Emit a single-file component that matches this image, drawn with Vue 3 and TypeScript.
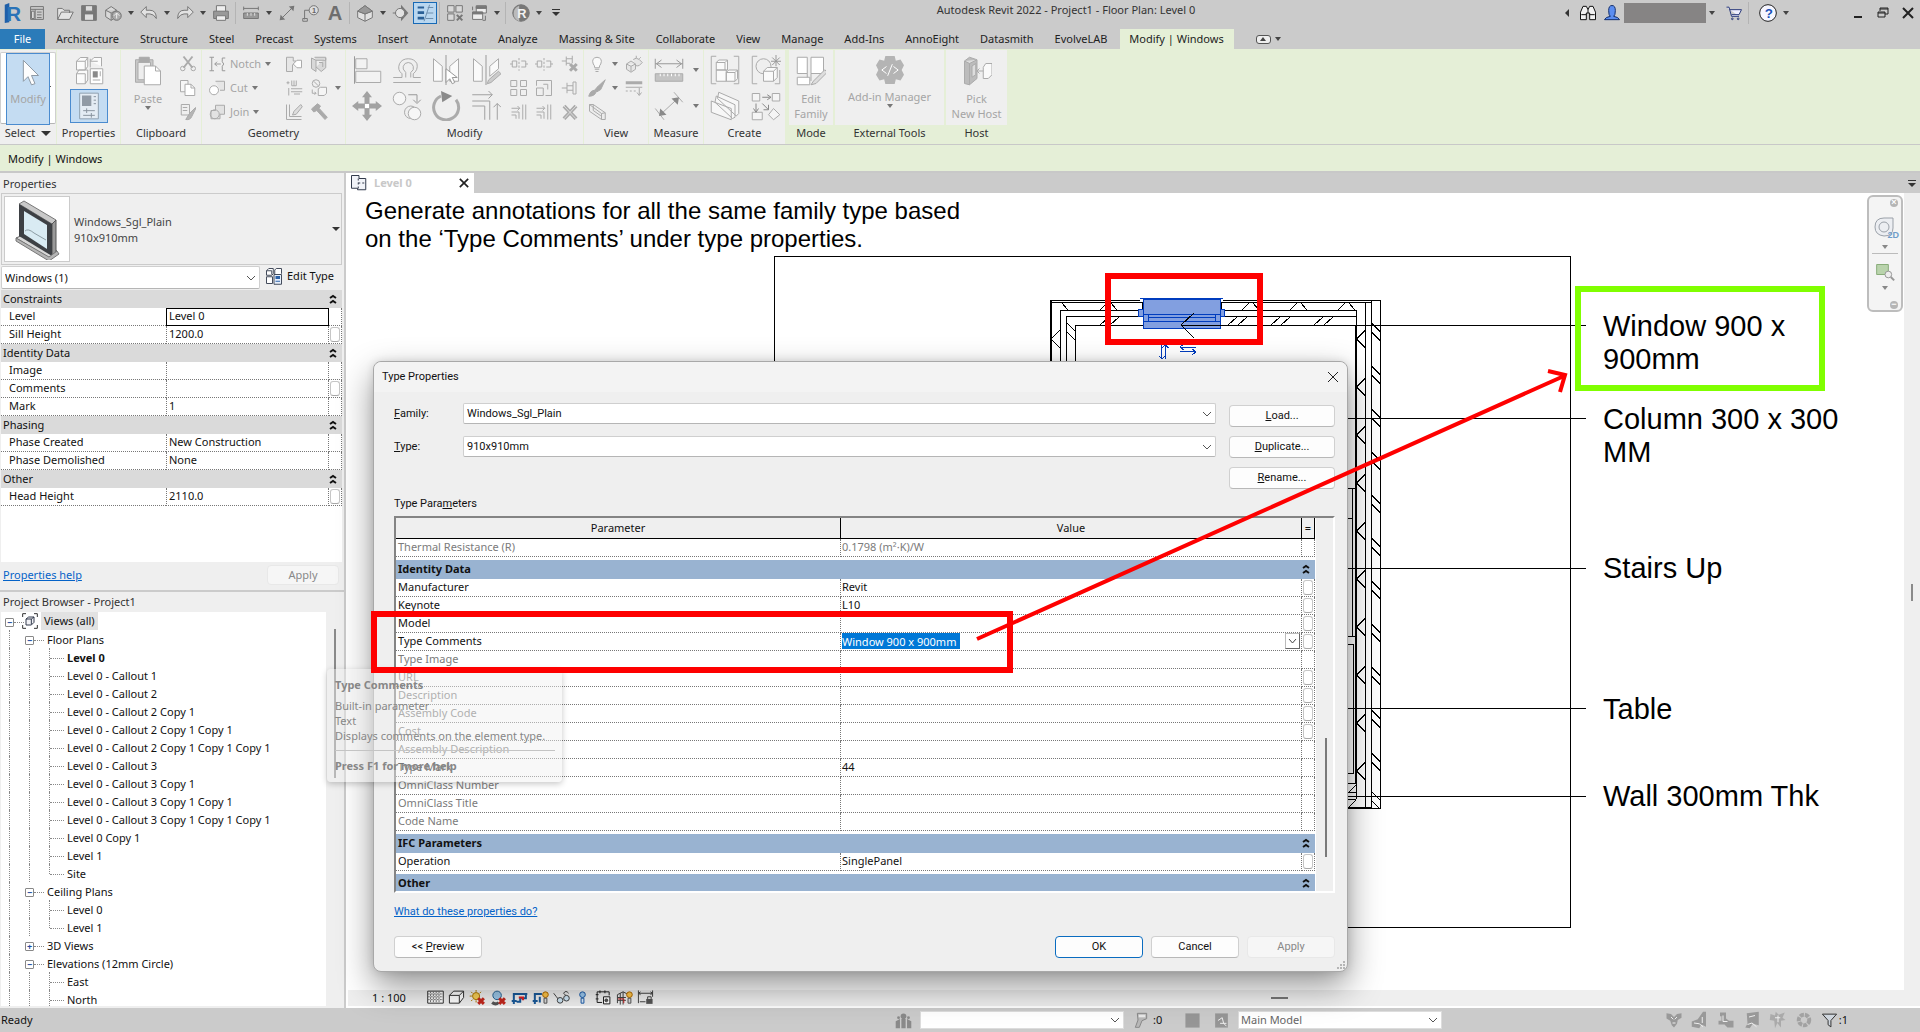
<script setup lang="ts">
import { ref } from 'vue'

interface QuickItem { kind: 'icon' | 'caret' | 'sep' | 'gap'; name?: string; label?: string; active?: boolean }
interface Cell { icon?: string; size?: number; label?: string; caret?: boolean; active?: boolean }
interface Column { w: number; kind?: 'big' | 'select'; pad?: number; cells: Cell[] }
interface Panel { title: string; green?: boolean; arrow?: boolean; cols: Column[] }
interface PropRow { group?: boolean; name: string; value?: string; button?: boolean; boxed?: boolean; dim?: boolean; edit?: boolean; sup?: boolean }
interface TreeRow { level: number; text: string; box?: string; bold?: boolean; last?: boolean }

/* Icon artwork; every drawing inherits stroke and fill from its svg element. */
const G = 'fill="#8a8a8a" stroke="none"'
const L = 'fill="#d9d9d9"'
const art: Record<string, string> = {
  revit: `<path d="M3 3l5-2v21l-5 1z" fill="#1f5fa8" stroke="none"/><text x="5" y="21" font-family="Liberation Sans" font-weight="bold" font-size="22" fill="#2a73b8" stroke="none">R</text>`,
  home: `<path d="M5 5h14v14H5zM5 8h14M10 8v11M12 11h5M12 14h5M12 17h5"/><path d="M6 10h3v8H6z" ${L}/>`,
  open: `<path d="M4 19V7h5l2 2h6v3M4 19l4-8h13l-4 8z" fill="#e4e4e4"/>`,
  save: `<path d="M4 4h16v16H4z" fill="#777"/><path d="M8 4h8v6H8zM7 13h10v7H7z" fill="#ddd"/>`,
  sync: `<path d="M4 9l6-4 6 4v7l-6 4-6-4zM4 9l6 3 6-3M10 12v8" ${L}/><circle cx="16" cy="15" r="5" fill="#aaa"/><path d="M13 15l3-3 3 3M16 12v6" stroke="#eee"/>`,
  undo: `<path d="M9 5v4h4q7 0 7 9-3-5-7-5H9v4l-6-6z" fill="#e2e2e2"/>`,
  redo: `<path d="M15 5v4h-4q-7 0-7 9 3-5 7-5h4v4l6-6z" fill="#e2e2e2"/>`,
  print: `<path d="M7 10V4h10v6" fill="#eee"/><path d="M4 10h16v8H4z" fill="#999"/><path d="M7 15h10v5H7z" fill="#eee"/>`,
  ruler: `<path d="M4 7h16M4 5v4M20 5v4"/><path d="M4 12h16v6H4z" fill="#999"/><path d="M8 12v3M12 12v3M16 12v3" stroke="#ddd"/>`,
  dim: `<path d="M6 18L18 6"/><path d="M4 20l1-6 5 5zM20 4l-1 6-5-5z" fill="#777" stroke="none"/>`,
  tag: `<path d="M5 19V9h5"/><circle cx="15" cy="9" r="5" fill="#ddd"/><path d="M3 18h5v3H3z"/><text x="13" y="12" font-size="8" font-family="Liberation Sans" font-weight="bold" fill="#666" stroke="none">1</text>`,
  letter: `<text x="4" y="20" font-size="22" font-family="Liberation Sans" font-weight="bold" fill="#6e6e6e" stroke="none">A</text>`,
  house: `<path d="M4 10l8-6 8 6v7l-8 4-8-4zM4 10l8 3 8-3M12 13v8" fill="#e2e2e2"/><path d="M4 10l8-6 8 6-8 3z" fill="#999"/>`,
  section: `<path d="M12 3l8 9-8 9z" fill="#777" stroke="none"/><circle cx="11" cy="12" r="5" fill="#e2e2e2"/><path d="M3 12h3"/>`,
  thin: `<path d="M4 5h7v2H4zM4 10h7v3H4zM4 16h7v3H4z" fill="#2a5f95" stroke="none"/><path d="M15 6h6M14 12h7M13 18h8M17 3l-6 18" stroke="#6f8fae"/>`,
  closehid: `<path d="M4 4h7v7H4zM13 4h7v7h-7zM4 13h7v7H4z" ${L}/><path d="M14 14l6 6M20 14l-6 6" stroke="#777" stroke-width="2"/>`,
  switchw: `<path d="M9 4h11v8H9z" fill="#eee"/><path d="M9 5h11v2H9z" fill="#777"/><path d="M5 11h11v8H5z" fill="#eee"/><path d="M5 11h11v2H5z" fill="#777"/><path d="M5 5v4M19 15v5h-3"/>`,
  round: `<circle cx="12" cy="12" r="9" fill="#777"/><path d="M10 4a9 9 0 000 17" fill="#bbb" stroke="none"/><text x="8" y="17" font-size="14" font-family="Liberation Sans" font-weight="bold" fill="#f2f2f2" stroke="none">R</text>`,
  bino: `<path d="M3 20v-9l3-7h4l2 4 2-4h4l3 7v9h-7v-8h-4v8z" fill="#f2f2f2" stroke="#111"/><path d="M4 14h6M14 14h6M12 8v4" stroke="#111"/>`,
  user: `<path d="M12 3q4 0 4 6t-2 7q6 1 7 4H3q1-3 7-4-2-1-2-7t4-6z" fill="#5b8df0" stroke="#16306b"/>`,
  cart: `<path d="M3 5h3l3 11h9M7 8h14l-3 6H9" stroke="#2c3c7c" fill="#eef"/><circle cx="10" cy="19" r="1"/><circle cx="17" cy="19" r="1"/>`,
  help: `<circle cx="12" cy="12" r="10" fill="#f6f6ff" stroke="#222"/><text x="8" y="18" font-size="16" font-family="Liberation Sans" font-weight="bold" fill="#1b50b8" stroke="none">?</text>`,
  arrow: `<path d="M8 2v18l4-4 3 7 3-1-3-7h6z" fill="#fdfdfd" stroke="#8f9aa5"/>`,
  types: `<path d="M2 5l3-3h6v7l-2 3H2zM2 5h7v7M9 5l2-3M13 5l3-3h6v7M13 5h6M2 15l2-3h7v8l-2 3H2zM2 15h7v8M13 3v7" fill="#fbfbfb"/><path d="M13 11h10v12H13z" fill="#fff"/><path d="M15 13h4v5h-4z" ${G}/><path d="M21 13v4M15 20h6"/>`,
  props: `<path d="M4 1h16v22H4z" fill="#e4ecf4" stroke="#8fa0b0"/><path d="M6 3h8v9H6z" fill="#909aa5" stroke="none"/><path d="M16 4h2M16 7h2M16 10h2M7 16h10M10 14v4M7 20h10M14 18v4" stroke="#8a959f"/>`,
  paste: `<path d="M2 3h14v18H2z" fill="#c8c8c8"/><path d="M4 5h10v14H4z" fill="#eee"/><path d="M5 1h8v4H5z" fill="#aaa"/><path d="M9 8h9l4 4v11H9z" fill="#fff"/><path d="M18 8v4h4"/>`,
  cut: `<path d="M6 2l12 15M18 2L6 17" stroke-width="2"/><circle cx="5" cy="18" r="3"/><circle cx="19" cy="18" r="3"/>`,
  copy: `<path d="M2 2h10v15H2z" fill="#f6f6f6"/><path d="M8 7h8l5 5v10H8z" fill="#fff"/><path d="M16 7v5h5"/>`,
  match: `<path d="M3 2h11v14H3zM5 6h6M5 10h6"/><path d="M22 6l-8 8-5 8q6 1 8-4l5-10z" fill="#b5b5b5"/>`,
  notch: `<path d="M2 3h6M5 3v18M2 21h6M9 12h8M12 9l-3 3 3 3M23 4h-4v5l2 3-2 3v6h4" stroke="#999"/>`,
  cutgeo: `<path d="M10 3h12v12h-6" fill="#e6e6e6"/><circle cx="8" cy="15" r="6" fill="#fff"/>`,
  join: `<path d="M10 3h12v12h-6v6H4V10h6z" fill="#e2e2e2"/><circle cx="9" cy="15" r="6"/>`,
  cope: `<path d="M2 3h9v5h4l-3 4-2 1v9H2z" fill="#e6e6e6"/><path d="M11 12l5-5h6v10h-6z" fill="#fff"/>`,
  wallj: `<path d="M2 4l6 3v15l-6-4zM8 7h13V3H6M21 4v13l-6 5-7-6M12 10h5v6" ${L}/>`,
  split2: `<path d="M2 5h4M4 3v4M9 2v7h6V2M12 2v7M8 13h15M8 17h15M5 12v10M12 20h8"/>`,
  paint: `<circle cx="8" cy="6" r="5"/><path d="M5 3l6 6M11 13l3-2h8v8l-3 3h-8zM3 14v5h5M6 17l2 2-2 2" fill="#f5f5f5"/>`,
  beam: `<path d="M2 2v20h20M6 2v16h16"/><path d="M21 2l-9 9-2 5 5-1 8-10z" fill="#ddd"/>`,
  hammer: `<path d="M2 8l8-7 4 3-2 3 11 12-3 3L9 10l-4 2z" fill="#aaa"/>`,
  align: `<path d="M2 1v22" stroke="#999"/><path d="M3 3h9v8H3zM3 13h20v9H3z" fill="#f2f2f2"/>`,
  offset: `<path d="M1 18h7v-3q-4-3-2-8 2-4 7-4t7 4q1 5-3 8v3h6M1 22h22M11 18v-4q-3-3-2-5 1-3 4-3t4 3q1 3-2 5v4"/>`,
  mirrorp: `<path d="M2 3l7 6v12H2zM22 3l-7 6v12h7z" fill="#fafafa"/><path d="M12 0v24" stroke="#999"/><path d="M12 11v11l3-3 2 4 2-1-2-4h4z" fill="#fff" stroke="#999"/>`,
  mirrord: `<path d="M2 3l7 6v12H2zM22 3l-7 6v8l7-6z" fill="#fafafa"/><path d="M12 0v24" stroke="#999"/><path d="M22 13l-8 7-1 3 3-1 8-7z" fill="#ccc"/>`,
  move: `<path d="M12 0l4 5h-2v5h-4V5H8zM12 24l4-5h-2v-5h-4v5H8zM0 12l5-4v2h5v4H5v2zM24 12l-5-4v2h-5v4h5v2z" fill="#a2a2a2" stroke="none"/><path d="M10 10h4v4h-4z" fill="#fff"/>`,
  copyel: `<circle cx="6" cy="6" r="5" fill="#f6f6f6"/><circle cx="15" cy="17" r="5"/><circle cx="18" cy="18" r="5" fill="#f6f6f6"/><path d="M13 3h7v6M17 7l3 3 3-3" stroke="#999"/>`,
  rotate: `<path d="M8 4a10 10 0 1012 3" stroke-width="3"/><path d="M8 0l9 4-8 5z" ${G}/>`,
  trim: `<path d="M1 8h14v15M1 12h10v11M1 3h16M14 0l3 3-3 3M21 23V10M18 13l3-3 3 3" stroke="#a0a0a0"/>`,
  splitel: `<path d="M3 8h6v8H3zM15 8h6v8h-6M12 4v3M12 9v3M12 14v3M12 19v2M0 12h3M21 12h3"/>`,
  array: `<path d="M1 2h8v8H1zM14 2h8v8h-8zM1 14h8v8H1zM14 14h8v8h-8z"/>`,
  scale: `<path d="M2 12h9v10H2zM2 9V2h20v20h-8M11 7h6v7" fill="none"/>`,
  extend: `<path d="M2 7h11M10 4l3 3-3 3M2 12h10v9M2 16h6v5M17 2v20M21 2v20"/>`,
  pin: `<path d="M1 12h7M8 5v14M8 9h8M8 15h8M16 4v16h4V4z"/>`,
  pinx: `<path d="M1 8h6M7 2v12M7 5h8M7 11h5M15 1v10"/><path d="M12 12l9 9M21 12l-9 9" stroke-width="3"/>`,
  del: `<path d="M4 4l16 17M20 4L4 21" stroke-width="4"/><path d="M4 4l16 17M20 4L4 21" stroke="#ddd"/>`,
  bulb: `<path d="M9 17q0-3-2-5-3-8 5-9 8 1 5 9-2 2-2 5zM9 19h6M10 22h4" fill="#fafafa"/>`,
  hideel: `<path d="M2 12l6-4 6 4v7l-6 4-6-4zM2 12l6 3 6-3M8 15v7M11 6a6 6 0 018 0l4 4-4 4q-3 1-5 0M15 1v3M21 3l-2 2" fill="#e6e6e6"/>`,
  brush: `<path d="M23 1l-11 10-3 4 3 2 5-3zM9 15q-6 0-8 8 8 0 10-6z" fill="#aaa"/>`,
  lines: `<path d="M1 5h22" stroke-width="3"/><path d="M1 11h22"/><path d="M1 16h16" stroke-dasharray="2 2"/><path d="M19 12v9M16 18l3 4 3-4"/>`,
  box: `<path d="M2 2h5l16 11v9h-5L2 11zM2 2l16 12v8M7 2v8l10 7M18 14l5-1" fill="#ececec"/>`,
  meas: `<path d="M1 7h22M1 3v8M23 3v8M6 4L2 7l4 3M18 4l4 3-4 3" stroke="#999"/><path d="M1 15h22v6H1z" fill="#c4c4c4"/><path d="M5 15v2M8 15v2M11 15v2M14 15v2M17 15v2M20 15v2" stroke="#fff"/>`,
  aldim: `<path d="M5 19L19 6M1 14l7 9M16 1l7 8"/><path d="M4 20l1-6 5 5zM20 5l-1 6-5-5z" ${G}/>`,
  group: `<path d="M5 1H1v22h4M19 1h4v22h-4"/><path d="M5 6l2-2h7v8H5zM5 12h8v9H5zM13 14l2-2h7v7l-2 2h-7zM5 6h7v6M12 6l2-2M13 14h7v7M20 14l2-2" fill="#fafafa"/>`,
  similar: `<path d="M5 1H1v22h4M23 12v11h-4"/><circle cx="10" cy="9" r="6"/><path d="M10 13l3-3h8v8l-3 3h-8zM10 13h8v8M18 13l3-3" fill="#fafafa"/><path d="M20 0v9M16 5h8M17 2l6 6M23 2l-6 6" stroke="#999"/>`,
  assembly: `<path d="M6 6l1-5 16 7v10l-2 2zM4 9l1-5 15 7v10l-2 1zM1 8l16 6v9L1 17z" fill="#f7f7f7"/>`,
  parts: `<path d="M1 2h6v6H1zM17 2h6v6h-6zM1 17h8v6H1zM18 14l5 5-5 4-4-4z" fill="#f5f5f5"/><path d="M9 5h6M13 3l3 2-3 2M4 10v6M2 14l2 3 2-3M9 10l5 5M14 11v4h-4" stroke="#888"/>`,
  editfam: `<path d="M1 1h8v13H1zM12 1h10v13H12zM1 17h10v6H1zM12 14v6M9 14v3" fill="#fff"/><path d="M23 11L14 20l-2 3 4-1 9-9z" fill="#ddd"/>`,
  gear: `<path d="M8 0h8l1 4 4-1 3 5-2 4 2 4-3 5-4-1-1 4H8l-1-4-4 1-3-5 2-4-2-4 3-5 4 1z" fill="#b4b4b4" stroke="none"/><path d="M9 9l-4 3 4 3M15 9l4 3-4 3M14 7l-4 10" stroke="#fff"/>`,
  host: `<path d="M2 4l4-3 6 2v15l-6 5-4-1z" fill="#bcbcbc"/><path d="M2 4l4 2 6-3M6 6v17M8 8v9l3-2V6z" fill="#ddd"/><path d="M17 9l2-3h5v9l-3 3h-4zM12 12h5M14 10l-2 2 2 2" fill="#fafafa"/>`,
  edittype: `<path d="M2 5l3-3h6v7l-2 2H2zM13 10V4l2-2h7v7M2 13h8v9H2zM2 5h7v5" fill="#fff" stroke="#444c5c"/><path d="M12 10h10v13H12z" fill="#e8f0fb" stroke="#444c5c"/><path d="M14 12h6v4h-6z" fill="#2c62a8" stroke="none"/><path d="M14 19h6" stroke="#2c62a8"/>`,
  plan: `<path d="M2 2h10v4h9v15H10v-2H2z" fill="#f1f3f8" stroke="#333b4c"/><path d="M11 6v14M11 12h10" stroke="#333b4c" stroke-dasharray="2 2"/>`,
  views: `<path d="M1 6V1h5M18 1h5v5M23 18v5h-5M6 23H1v-5" stroke="#333"/><path d="M6 9l4-3h8v8l-4 4H6zM6 9h8v8M14 9l4-3" fill="#f2f2f6" stroke="#333b4c"/>`,
  detail: `<path d="M1 3h22v17H1z" fill="#fff" stroke="#333"/><path d="M1 7h22M1 11h22M1 15h22M5 3v17M9 3v17M13 3v17M17 3v17" stroke="#777" stroke-dasharray="2 1"/>`,
  cube: `<path d="M2 9l6-6h14v9l-6 8H2zM2 9h14v11M16 9l6-6" fill="#fff" stroke="#333"/>`,
  sun: `<circle cx="10" cy="10" r="5" fill="#f8cf57" stroke="#b27a00"/><path d="M10 1v3M10 16v3M1 10h3M3 4l2 2M17 4l-2 2M3 17l2-2" stroke="#b27a00"/><path d="M13 13l8 8M21 13l-8 8" stroke="#c3281e" stroke-width="3"/>`,
  shadow: `<circle cx="10" cy="9" r="6" fill="#9cc7e8" stroke="#276596"/><path d="M3 19q5 4 9 0" stroke="#555" stroke-width="3"/><path d="M13 13l8 8M21 13l-8 8" stroke="#c3281e" stroke-width="3"/>`,
  crop: `<path d="M4 21V7h19M1 17h7M21 7v6h-8v5H8" stroke="#1a5a9a" stroke-width="2"/><path d="M11 12h6v4" stroke="#d22" stroke-width="2"/>`,
  cropv: `<path d="M4 21V7h10M1 17h7M11 11v8" stroke="#1a5a9a" stroke-width="2"/><circle cx="19" cy="8" r="4" fill="#ffc64a" stroke="#b36b00"/><path d="M17 13h4v7h-4z" fill="#ddd" stroke="#555"/>`,
  glasses: `<path d="M1 6q3 4 7 9M22 6q-4-5-7 0l4 4" stroke="#444"/><circle cx="10" cy="16" r="4" fill="#cfe6f5" stroke="#444"/><circle cx="19" cy="13" r="4" fill="#cfe6f5" stroke="#444"/>`,
  reveal: `<circle cx="12" cy="8" r="4" fill="#9cc9f0" stroke="#1c5ba8"/><path d="M10 13h4v7h-4z" fill="#dcecfa" stroke="#1c5ba8"/>`,
  temp: `<path d="M3 4h17v5M3 4v15h7M1 8h4M1 14h4M7 2v4M14 2v4" stroke="#222"/><path d="M12 11h9v10h-9z" fill="#fff" stroke="#222"/><circle cx="16" cy="16" r="2" fill="#555"/>`,
  analyt: `<path d="M2 20V8l8-4 6 3M6 22V6M10 22V4M2 12h12M2 16h12" stroke="#444"/><path d="M3 14h8v6" stroke="#c22"/><circle cx="19" cy="8" r="4" fill="#ffc64a" stroke="#b36b00"/><path d="M17 13h4v7h-4z" fill="#ddd" stroke="#555"/>`,
  constr: `<path d="M2 2v18M22 2v9M2 6h20M5 4L2 6l3 2M19 4l3 2-3 2M4 18h8" stroke="#444"/><path d="M13 14h9v7h-9z" fill="#555" stroke="none"/><path d="M15 14v-3h5v3"/>`,
  worksets: `<path d="M1 23V13l6-3v13zM9 23V10h6v13zM17 23V10l6 3v10z" ${G}/><circle cx="12" cy="6" r="4" ${G}/><circle cx="5" cy="8" r="2" ${G}/><circle cx="19" cy="8" r="2" ${G}/>`,
  editreq: `<path d="M8 2h14v8l-7 3-4 10H5l4-11z" fill="#b8b8b8" stroke="#888"/><path d="M10 4h10v4H10z" fill="#e8e8e8"/>`,
  option: `<path d="M2 2h20v20H2z" fill="#969696" stroke="none"/>`,
  optadd: `<path d="M3 2h18v20H3z" fill="#969696" stroke="none"/><path d="M7 12l6-4 2 8 4 4M10 16h9" stroke="#eee"/>`,
  s1: `<path d="M2 3l6 1 4 4 4-4 6-1v6l-5 3-1 5-4 5-3-3-2-6-5-3z" fill="#999" stroke="none"/><path d="M8 8l3 3M16 8l-3 3M10 16h4" stroke="#eee"/>`,
  s2: `<path d="M1 21v-7l8-3 7-10h4v20l-6-3-3 5z" fill="#999" stroke="none"/><path d="M4 16l7 1 5 4M15 8v8" stroke="#eee"/>`,
  s3: `<path d="M4 2h8v8l4 3h6v9h-8l-4-4H2v-5h4V7H4z" fill="#999" stroke="none"/><path d="M8 6v8h6" stroke="#eee"/>`,
  s4: `<path d="M5 3l16-2v18l-8-2-4 6-6-1 3-5z" fill="#999" stroke="none"/><path d="M8 8l8-2M6 18l6-2 6 5" stroke="#eee"/>`,
  s5: `<path d="M2 4l6 2 1-5 4 4 8-3-3 7 4 3-6 1v9l-5-6-3 7-1-10-6-1z" fill="#aaa" stroke="none"/><path d="M8 9h7M12 6v9" stroke="#eee"/>`,
  s6: `<circle cx="12" cy="12" r="7" stroke="#a2a2a2" stroke-width="4" stroke-dasharray="4 1"/>`,
  filter: `<path d="M2 3h20l-8 9v9l-4-3v-6z" fill="#cfd6de" stroke="#333"/>`,
  wheel: `<path d="M20 3v10q0 8-9 8-9-1-9-9 0-9 9-9z" fill="#eceef2" stroke="#9aa0a8"/><circle cx="11" cy="12" r="5" stroke="#9aa0a8"/>`,
  zoomr: `<path d="M2 3h14v12H2z" fill="#b9d3ac" stroke="#89ad7a"/><circle cx="16" cy="15" r="4" fill="#eee" stroke="#999"/><path d="M19 18l4 4" stroke="#999" stroke-width="2"/>`,
}

const ic = (name: string, label: string, active = false): QuickItem => ({ kind: 'icon', name, label, active })
const caret: QuickItem = { kind: 'caret' }
const sep: QuickItem = { kind: 'sep' }
const quick: QuickItem[] = [
  ic('revit', 'Revit'), ic('home', 'Home'), { kind: 'gap' }, ic('open', 'Open'), ic('save', 'Save'), ic('sync', 'Synchronize'), caret,
  ic('undo', 'Undo'), caret, ic('redo', 'Redo'), caret, ic('print', 'Print'), sep, ic('ruler', 'Measure'), caret,
  ic('dim', 'Aligned dimension'), ic('tag', 'Tag'), ic('letter', 'Text'), sep, ic('house', '3D view'), caret, ic('section', 'Section'),
  ic('thin', 'Thin lines', true), sep, ic('closehid', 'Close inactive views'), ic('switchw', 'Switch windows'), caret, sep,
  ic('round', 'Add-in'), caret,
]

const tabs = ['Architecture', 'Structure', 'Steel', 'Precast', 'Systems', 'Insert', 'Annotate', 'Analyze', 'Massing & Site', 'Collaborate', 'View', 'Manage', 'Add-Ins', 'AnnoEight', 'Datasmith', 'EvolveLAB']

const s = (...names: string[]): Cell[] => names.map((icon) => ({ icon, size: 18 }))
const b = (...names: string[]): Cell[] => names.map((icon) => ({ icon, size: 30 }))
const panels: Panel[] = [
  { title: 'Select', arrow: true, cols: [{ w: 56, kind: 'select', cells: [{ icon: 'arrow', size: 28, label: 'Modify', active: true }] }] },
  { title: 'Properties', cols: [{ w: 63, cells: [{ icon: 'types', size: 30 }, { icon: 'props', size: 28, active: true }] }] },
  { title: 'Clipboard', cols: [{ w: 54, kind: 'big', cells: [{ icon: 'paste', size: 30, label: 'Paste', caret: true }] }, { w: 26, cells: s('cut', 'copy', 'match') }] },
  { title: 'Geometry', cols: [
    { w: 80, pad: 6, cells: [{ icon: 'notch', size: 18, label: 'Notch', caret: true }, { icon: 'cutgeo', size: 18, label: 'Cut', caret: true }, { icon: 'join', size: 18, label: 'Join', caret: true }] },
    { w: 24, cells: s('cope', 'split2', 'beam') }, { w: 25, cells: s('wallj', 'paint', 'hammer') }, { w: 14, cells: [{}, { caret: true }, {}] },
  ] },
  { title: 'Modify', cols: [
    { w: 41, cells: b('align', 'move') }, { w: 39, cells: b('offset', 'copyel') }, { w: 39, cells: b('mirrorp', 'rotate') }, { w: 41, cells: b('mirrord', 'trim') },
    { w: 25, cells: s('splitel', 'array', 'extend') }, { w: 25, cells: s('splitel', 'scale', 'extend') }, { w: 27, cells: s('pinx', 'pin', 'del') },
  ] },
  { title: 'View', cols: [{ w: 26, cells: s('bulb', 'brush', 'box') }, { w: 10, cells: [{ caret: true }, { caret: true }, {}] }, { w: 28, cells: s('hideel', 'lines').concat({}) }] },
  { title: 'Measure', cols: [{ w: 40, cells: b('meas', 'aldim') }, { w: 14, cells: [{ caret: true }, { caret: true }] }] },
  { title: 'Create', cols: [{ w: 42, cells: b('group', 'assembly') }, { w: 39, cells: b('similar', 'parts') }] },
  { title: 'Mode', green: true, cols: [{ w: 44, kind: 'big', cells: [{ icon: 'editfam', size: 30, label: 'Edit\nFamily' }] }] },
  { title: 'External Tools', green: true, cols: [{ w: 109, kind: 'big', cells: [{ icon: 'gear', size: 28, label: 'Add-in Manager', caret: true }] }] },
  { title: 'Host', green: true, cols: [{ w: 61, kind: 'big', cells: [{ icon: 'host', size: 30, label: 'Pick\nNew Host' }] }] },
]

const instanceRows: PropRow[] = [
  { group: true, name: 'Constraints' },
  { name: 'Level', value: 'Level 0', boxed: true },
  { name: 'Sill Height', value: '1200.0', button: true },
  { group: true, name: 'Identity Data' },
  { name: 'Image' },
  { name: 'Comments', button: true },
  { name: 'Mark', value: '1' },
  { group: true, name: 'Phasing' },
  { name: 'Phase Created', value: 'New Construction' },
  { name: 'Phase Demolished', value: 'None' },
  { group: true, name: 'Other' },
  { name: 'Head Height', value: '2110.0', button: true },
]

const typeRows: PropRow[] = [
  { name: 'Thermal Resistance (R)', dim: true, sup: true },
  { group: true, name: 'Identity Data' },
  { name: 'Manufacturer', value: 'Revit', button: true },
  { name: 'Keynote', value: 'L10', button: true },
  { name: 'Model', button: true },
  { name: 'Type Comments', edit: true, button: true },
  { name: 'Type Image', dim: true },
  { name: 'URL', dim: true, button: true },
  { name: 'Description', dim: true, button: true },
  { name: 'Assembly Code', dim: true, button: true },
  { name: 'Cost', dim: true, button: true },
  { name: 'Assembly Description', dim: true },
  { name: 'Type Mark', value: '44' },
  { name: 'OmniClass Number', dim: true },
  { name: 'OmniClass Title', dim: true },
  { name: 'Code Name', dim: true },
  { group: true, name: 'IFC Parameters' },
  { name: 'Operation', value: 'SinglePanel', button: true },
  { group: true, name: 'Other' },
]

const tree: TreeRow[] = [
  { level: 0, text: 'Views (all)', box: '−' },
  { level: 1, text: 'Floor Plans', box: '−' },
  { level: 2, text: 'Level 0', bold: true },
  { level: 2, text: 'Level 0 - Callout 1' },
  { level: 2, text: 'Level 0 - Callout 2' },
  { level: 2, text: 'Level 0 - Callout 2 Copy 1' },
  { level: 2, text: 'Level 0 - Callout 2 Copy 1 Copy 1' },
  { level: 2, text: 'Level 0 - Callout 2 Copy 1 Copy 1 Copy 1' },
  { level: 2, text: 'Level 0 - Callout 3' },
  { level: 2, text: 'Level 0 - Callout 3 Copy 1' },
  { level: 2, text: 'Level 0 - Callout 3 Copy 1 Copy 1' },
  { level: 2, text: 'Level 0 - Callout 3 Copy 1 Copy 1 Copy 1' },
  { level: 2, text: 'Level 0 Copy 1' },
  { level: 2, text: 'Level 1' },
  { level: 2, text: 'Site', last: true },
  { level: 1, text: 'Ceiling Plans', box: '−' },
  { level: 2, text: 'Level 0' },
  { level: 2, text: 'Level 1', last: true },
  { level: 1, text: '3D Views', box: '+' },
  { level: 1, text: 'Elevations (12mm Circle)', box: '−' },
  { level: 2, text: 'East' },
  { level: 2, text: 'North' },
]

const viewIcons = ['detail', 'cube', 'sun', 'shadow', 'crop', 'cropv', 'glasses', 'reveal', 'temp', 'analyt', 'constr']
const selectIcons = ['s1', 's2', 's3', 's4', 's5', 's6']

/* Hatch positions in the plan, in drawing units. */
const insulation = Array.from({ length: 10 }, (_, i) => 339 + i * 48)
const brick = Array.from({ length: 12 }, (_, i) => 323 + i * 43).filter((y) => y < 790)
const topPeaks = [1109, 1251, 1299, 1347]
const topSlashes = [1100, 1228, 1271, 1314]
const leaders = [418, 568, 708, 796]

const filterBy = ref('Windows (1)')
const family = ref('Windows_Sgl_Plain')
const typeName = ref('910x910mm')
const comment = ref('Window 900 x 900mm')
const workset = ref('')
const option = ref('Main Model')
</script>

<template>
  <div class="app">
    <header class="titlebar">
      <div class="quick">
        <template v-for="(q, i) in quick" :key="i">
          <button v-if="q.kind === 'icon'" class="qbtn" :class="{ active: q.active }" :aria-label="q.label">
            <svg width="22" height="22" viewBox="0 0 24 24" fill="none" stroke="#777" v-html="art[q.name!]"></svg>
          </button>
          <span v-else-if="q.kind === 'caret'" class="caret-slot"><i class="caret"></i></span>
          <span v-else-if="q.kind === 'sep'" class="qsep"></span>
          <span v-else class="qgap"></span>
        </template>
        <button class="customize" aria-label="Customize"><i class="bar"></i><i class="caret wide"></i></button>
      </div>
      <div class="apptitle">Autodesk Revit 2022 - Project1 - Floor Plan: Level 0</div>
      <div class="account">
        <i class="left-caret"></i>
        <button class="qbtn" aria-label="Search"><svg width="20" height="20" viewBox="0 0 24 24" fill="none" v-html="art.bino"></svg></button>
        <button class="qbtn" aria-label="Account"><svg width="20" height="20" viewBox="0 0 24 24" fill="none" v-html="art.user"></svg></button>
        <span class="masked"></span>
        <span class="caret-slot"><i class="caret"></i></span>
        <button class="qbtn cart" aria-label="App store"><svg width="20" height="20" viewBox="0 0 24 24" fill="none" stroke="#2c3c7c" v-html="art.cart"></svg></button>
        <span class="qsep"></span>
        <button class="qbtn help" aria-label="Help"><svg width="20" height="20" viewBox="0 0 24 24" fill="none" v-html="art.help"></svg></button>
        <span class="caret-slot"><i class="caret"></i></span>
        <div class="winbtns">
          <button aria-label="Minimize"><svg width="12" height="12" viewBox="0 0 12 12"><path d="M2 10h8" stroke="#222" stroke-width="2" /></svg></button>
          <button aria-label="Restore"><svg width="12" height="12" viewBox="0 0 12 12" fill="#ccc" stroke="#222"><path d="M3 4V1h8v6H8" /><path d="M1 5h7v5H1zM1 6h7M3 2h8" /></svg></button>
          <button aria-label="Close"><svg width="12" height="12" viewBox="0 0 12 12"><path d="M1 1l10 10M11 1L1 11" stroke="#222" stroke-width="2" /></svg></button>
        </div>
      </div>
    </header>

    <nav class="tabs">
      <button class="tab file">File</button>
      <button v-for="t in tabs" :key="t" class="tab">{{ t }}</button>
      <button class="tab current">Modify | Windows</button>
      <button class="collapse" aria-label="Minimize ribbon"><span class="pill"><i class="caret up"></i></span><i class="caret"></i></button>
    </nav>

    <section class="ribbon">
      <div v-for="p in panels" :key="p.title" class="panel" :class="{ green: p.green }">
        <div class="panel-body">
          <div v-for="(c, ci) in p.cols" :key="ci" class="col" :class="c.kind" :style="{ width: c.w + 'px' }">
            <button v-for="(cell, k) in c.cells" :key="k" class="cell" :class="{ active: cell.active, start: c.pad }" :disabled="!cell.icon" :aria-label="cell.label || cell.icon || 'More'">
              <svg v-if="cell.icon" :width="cell.size" :height="cell.size" viewBox="0 0 24 24" fill="none" stroke="#ababab" v-html="art[cell.icon]"></svg>
              <span v-if="cell.label" class="cell-label">{{ cell.label }}</span>
              <i v-if="cell.caret" class="caret"></i>
            </button>
          </div>
        </div>
        <div class="panel-title">{{ p.title }}<i v-if="p.arrow" class="caret wide"></i></div>
      </div>
    </section>

    <div class="options">Modify | Windows</div>

    <main class="work">
      <aside class="side">
        <div class="pane-title">Properties</div>
        <div class="type-card">
          <div class="thumb">
            <svg width="60" height="62" viewBox="0 0 60 62">
              <path d="M9 40l7-3 34 16-8 7z" fill="#d8d8d8" stroke="#666" />
              <path d="M12 6l5-3 32 19-4 4z" fill="#c9c9c9" stroke="#777" />
              <path d="M45 26l4-4v32l-4 4z" fill="#999" stroke="#555" />
              <path d="M12 6l33 20v32L12 38z" fill="#3d4044" />
              <path d="M17 13l23 14v24L17 36z" fill="#d9ebf3" />
              <path d="M18 33q3-3 9 2l12 7" fill="none" stroke="#8d9da4" />
              <path d="M9 40v3l33 20 10-7-2-3-8 6z" fill="#b5b5b5" stroke="#777" />
            </svg>
          </div>
          <div class="type-name">Windows_Sgl_Plain<br />910x910mm</div>
          <i class="caret wide"></i>
        </div>
        <div class="filter-row">
          <select v-model="filterBy" class="select filter" aria-label="Filter"><option>Windows (1)</option></select>
          <button class="edit-type"><svg width="18" height="18" viewBox="0 0 24 24" fill="none" v-html="art.edittype"></svg>Edit Type</button>
        </div>
        <div class="instance-area">
          <table class="grid instance">
            <colgroup><col class="c-name" /><col /><col class="c-eq" /></colgroup>
            <tbody>
              <template v-for="(r, i) in instanceRows" :key="i">
                <tr v-if="r.group" class="group"><th colspan="2">{{ r.name }}</th><th><svg width="8" height="10" viewBox="0 0 8 10" fill="none" stroke="#111" stroke-width="2"><path d="M1 4l3-2 3 2M1 9l3-2 3 2" /></svg></th></tr>
                <tr v-else>
                  <td class="name">{{ r.name }}</td>
                  <td class="value" :class="{ boxed: r.boxed }">{{ r.value }}</td>
                  <td class="eq"><button v-if="r.button" class="mini" :aria-label="'Associate ' + r.name"></button></td>
                </tr>
              </template>
            </tbody>
          </table>
        </div>
        <div class="pane-foot">
          <a href="#">Properties help</a>
          <button class="btn disabled apply">Apply</button>
        </div>
        <div class="pane-title browser">Project Browser - Project1</div>
        <div class="browser-area">
          <ul class="tree">
            <li v-for="(r, i) in tree" :key="i" :class="{ bold: r.bold }">
              <span v-for="g in r.level" :key="g" class="guide"></span>
              <span v-if="r.box" class="node"><span class="pm">{{ r.box }}</span></span>
              <span v-else class="guide leaf" :class="{ last: r.last }"></span>
              <svg v-if="r.level === 0" class="root-icon" width="16" height="16" viewBox="0 0 24 24" fill="none" v-html="art.views"></svg>
              <span class="tree-text" :class="{ root: r.level === 0 }">{{ r.text }}</span>
            </li>
          </ul>
          <div class="vscroll"><i></i></div>
        </div>
      </aside>

      <section class="view">
        <div class="doc-tabs">
          <div class="doc-tab">
            <svg width="18" height="18" viewBox="0 0 24 24" fill="none" v-html="art.plan"></svg>
            <span>Level 0</span>
            <button aria-label="Close view"><svg width="10" height="10" viewBox="0 0 12 12"><path d="M1 1l10 10M11 1L1 11" stroke="#222" stroke-width="2" /></svg></button>
          </div>
          <button class="customize end" aria-label="View list"><i class="bar"></i><i class="caret wide"></i></button>
        </div>
        <div class="canvas-row">
          <div class="canvas">
            <svg class="plan" fill="none" stroke="#000" shape-rendering="crispEdges">
              <g transform="translate(-346 -193)">
                <rect x="774.5" y="256.500" width="796" height="671" />
                <path d="M1050 300.500H1140M1223 300.500H1381M1051 302.500H1142v8M1221 310v-8H1371M1060 310.500H1140M1224 310.500H1357M1066 316.500H1143M1221 316.500H1357M1075 325.500H1143M1181 325.500H1586" />
                <path d="M1060.500 310V420M1066.500 316V420M1075.500 325V420" />
                <path d="M1051 301V420" stroke-width="2" />
                <path d="M1356 325V784" stroke-width="2" />
                <path d="M1356.500 310V799M1365.500 302V807M1371.500 300V808M1380.500 301V808" />
                <path d="M1340 808.500H1381M1340 807.500H1371" />
                <path v-for="y in insulation" :key="'i' + y" :d="`M1365.500 ${y - 9}l-9 9l9 9`" />
                <path v-for="y in brick" :key="'b' + y" :d="`M1371.500 ${y}l9 9M1371.500 ${y + 9}l9 9`" />
                <path v-for="x in topPeaks" :key="'p' + x" :d="`M${x - 9} 310l8-8M${x + 1} 302l7 8`" />
                <path v-for="x in topSlashes" :key="'s' + x" :d="`M${x} 325l9-8M${x + 10} 325l9-8`" />
                <path d="M1061 302l7 8M1060 330l-9 9 9 9M1067 323l9 9M1067 332l9 9M1348 793l8-8M1348 808l8-8M1372 792l8 8M1372 801l7 7" />
                <path d="M1340 488.500H1355M1340 518.500H1353M1352.500 488V636M1340 636.500H1355M1340 644.500H1353.500V773H1340M1340 783.500H1356M1340 792.500H1356M1340 799.500H1356" />
                <path v-for="y in leaders" :key="'l' + y" :d="`M1340 ${y}.500H1586`" />
                <g stroke="#003cbe">
                  <rect x="1143.500" y="299.500" width="77" height="29" fill="#829fe0" />
                  <path d="M1140 298.500H1223M1143 314.500H1221M1143 321.500H1221M1148.500 314V321M1215.500 314V321M1148 317.500H1216" />
                  <rect x="1138.500" y="309.500" width="5" height="7" fill="#829fe0" />
                  <rect x="1220.500" y="309.500" width="4" height="7" fill="#829fe0" />
                  <path d="M1161.500 344V359M1165.500 345V359M1159 356l3 3 3-3M1162 348l3-3 4 3M1180 347.500H1196M1180 351.500H1196M1184 344l-4 3 4 3M1192 349l4 3-4 3" />
                </g>
                <path d="M1194 313l-13 12 13 13M1181 325.500H1221" />
              </g>
            </svg>
            <p class="note headline">Generate annotations for all the same family type based<br />on the ‘Type Comments’ under type properties.</p>
            <p class="note window">Window 900 x<br />900mm</p>
            <p class="note column">Column 300 x 300<br />MM</p>
            <p class="note stairs">Stairs Up</p>
            <p class="note table">Table</p>
            <p class="note wall">Wall 300mm Thk</p>
            <div class="navbar">
              <i class="dot">×</i>
              <svg width="24" height="24" viewBox="0 0 24 24" fill="none" v-html="art.wheel"></svg>
              <span class="two-d">2D</span>
              <i class="caret"></i>
              <hr />
              <svg width="20" height="20" viewBox="0 0 24 24" fill="none" v-html="art.zoomr"></svg>
              <i class="caret"></i>
              <i class="dot bottom">−</i>
            </div>
          </div>
          <div class="canvas-scroll"><i></i></div>
        </div>
        <div class="viewbar">
          <span class="scale">1 : 100</span>
          <button v-for="v in viewIcons" :key="v" :aria-label="v"><svg width="17" height="17" viewBox="0 0 24 24" fill="none" stroke="#444" v-html="art[v]"></svg></button>
          <i class="hthumb"></i>
        </div>
      </section>
    </main>

    <footer class="status">
      <span class="ready">Ready</span>
      <svg class="w-icon" width="17" height="17" viewBox="0 0 24 24" fill="none" stroke="#888" v-html="art.worksets"></svg>
      <select v-model="workset" class="select flat" aria-label="Active workset"><option value=""></option></select>
      <svg class="req" width="16" height="16" viewBox="0 0 24 24" fill="none" v-html="art.editreq"></svg>
      <span class="count">:0</span>
      <svg width="17" height="17" viewBox="0 0 24 24" fill="none" v-html="art.option"></svg>
      <svg class="opt2" width="17" height="17" viewBox="0 0 24 24" fill="none" v-html="art.optadd"></svg>
      <select v-model="option" class="select flat" aria-label="Design option"><option>Main Model</option></select>
      <div class="right-tools">
        <button v-for="n in selectIcons" :key="n" :aria-label="n"><svg width="18" height="18" viewBox="0 0 24 24" fill="none" v-html="art[n]"></svg></button>
        <svg width="17" height="17" viewBox="0 0 24 24" fill="none" v-html="art.filter"></svg><span>:1</span>
      </div>
    </footer>

    <div class="dialog" role="dialog" aria-label="Type Properties">
      <div class="dlg-title"><span>Type Properties</span>
        <button aria-label="Close"><svg width="12" height="12" viewBox="0 0 12 12" fill="none" stroke="#222"><path d="M1 1l10 10M11 1L1 11" /></svg></button>
      </div>
      <div class="form">
        <div class="fields">
          <div class="field"><label for="family"><u>F</u>amily:</label><select id="family" v-model="family" class="select"><option>Windows_Sgl_Plain</option></select></div>
          <div class="field"><label for="type"><u>T</u>ype:</label><select id="type" v-model="typeName" class="select"><option>910x910mm</option></select></div>
        </div>
        <div class="side-btns">
          <button class="btn"><u>L</u>oad...</button>
          <button class="btn"><u>D</u>uplicate...</button>
          <button class="btn"><u>R</u>ename...</button>
        </div>
      </div>
      <div class="params-label">Type Para<u>m</u>eters</div>
      <div class="params">
        <div class="params-clip">
          <table class="grid types">
            <colgroup><col class="c-name" /><col /><col class="c-eq" /></colgroup>
            <thead><tr><th>Parameter</th><th>Value</th><th>=</th></tr></thead>
            <tbody>
              <template v-for="(r, i) in typeRows" :key="i">
                <tr v-if="r.group" class="group"><th colspan="2">{{ r.name }}</th><th><svg width="8" height="10" viewBox="0 0 8 10" fill="none" stroke="#111" stroke-width="2"><path d="M1 4l3-2 3 2M1 9l3-2 3 2" /></svg></th></tr>
                <tr v-else :class="{ dim: r.dim }">
                  <td class="name">{{ r.name }}</td>
                  <td class="value">
                    <div v-if="r.edit" class="edit"><input v-model="comment" aria-label="Type Comments" /><button class="drop" aria-label="Choose"><svg width="9" height="6" viewBox="0 0 9 6" fill="none" stroke="#444"><path d="M1 1l3.500 4L8 1" /></svg></button></div>
                    <template v-else-if="r.sup">0.1798 (m²·K)/W</template>
                    <template v-else>{{ r.value }}</template>
                  </td>
                  <td class="eq"><button v-if="r.button" class="mini" :aria-label="'Associate ' + r.name"></button></td>
                </tr>
              </template>
            </tbody>
          </table>
        </div>
        <div class="params-scroll"><i></i></div>
      </div>
      <div class="help-link"><a href="#">What do these properties do?</a></div>
      <div class="dlg-foot">
        <button class="btn preview">&lt;&lt; <u>P</u>review</button>
        <button class="btn ok">OK</button>
        <button class="btn">Cancel</button>
        <button class="btn disabled">Apply</button>
      </div>
      <svg class="grip" width="9" height="9" viewBox="0 0 9 9" fill="#b5b5b5"><path d="M6 0h2v2H6zM3 3h2v2H3zM6 3h2v2H6zM0 6h2v2H0zM3 6h2v2H3zM6 6h2v2H6z" /></svg>
    </div>

    <div class="tooltip" role="tooltip">
      <b>Type Comments</b>
      <p>Built-in parameter<br />Text<br />Displays comments on the element type.</p>
      <b class="f1">Press F1 for more help</b>
    </div>

    <svg class="markup" fill="none" stroke="#fe0000">
      <rect x="1108" y="276" width="152" height="66" stroke-width="6" />
      <rect x="374" y="614" width="636" height="56" stroke-width="6" />
      <rect x="1578" y="289" width="244" height="99" stroke="#80ff00" stroke-width="6" />
      <path d="M977 639L1564 376M1548 371l17 4-5 17" stroke-width="4" />
    </svg>
  </div>
</template>

<style>
html, body { margin: 0; background: #cbcbcb; }
</style>

<style scoped>
.app { position: relative; display: flex; flex-direction: column; height: 100vh; overflow: hidden; font-family: "Noto Sans", "Open Sans", sans-serif; font-size: 11px; line-height: 18px; color: #111; background: #cbcbcb; }
.app *, .app *::before, .app *::after { box-sizing: border-box; }
.app :deep(svg[viewBox="0 0 24 24"] path), .app :deep(svg[viewBox="0 0 24 24"] circle) { vector-effect: non-scaling-stroke; }
button, select, input { font: inherit; color: inherit; margin: 0; padding: 0; }
button { border: 0; background: none; }
svg { display: block; flex: none; }
.caret { display: block; flex: none; width: 0; height: 0; border: 3px solid transparent; border-top: 4px solid #444; border-bottom: 0; }
.caret.wide { border-width: 5px; border-top: 5px solid #333; border-bottom: 0; }
.caret.up { border-top: 0; border-bottom: 4px solid #444; }

.titlebar { display: flex; height: 29px; flex: none; }
.quick { display: flex; align-items: center; height: 25px; padding-left: 1px; }
.qbtn { display: flex; align-items: center; justify-content: center; width: 24px; height: 24px; }
.qbtn.active { height: 22px; background: #b9d7f0; border: 1px solid #1769b5; }
.caret-slot { display: flex; justify-content: center; width: 12px; }
.qsep { width: 6px; height: 22px; background: linear-gradient(90deg, transparent 2px, #b4b4b4 2px, #b4b4b4 3px, transparent 3px); }
.qgap { width: 4px; }
.customize { display: flex; flex-direction: column; align-items: center; gap: 2px; width: 22px; }
.customize .bar { width: 8px; height: 1px; background: #333; }
.customize .caret.wide { border-width: 4px; border-top: 4px solid #333; border-bottom: 0; }
.apptitle { flex: 1; text-align: center; line-height: 20px; color: #333; }
.account { display: flex; align-items: center; height: 25px; }
.left-caret { border: 4px solid transparent; border-right: 4px solid #333; border-left: 0; margin-right: 7px; }
.masked { width: 82px; height: 20px; background: #868484; }
.cart { margin-left: 4px; }
.help { margin-left: 4px; }
.winbtns { display: flex; gap: 13px; margin: 0 6px 0 60px; }

.tabs { display: flex; height: 20px; flex: none; }
.tab { padding: 0 10px 0 11px; height: 20px; line-height: 18px; color: #222; white-space: nowrap; }
.tab.file { width: 45px; padding: 0; background: #2b7bb9; color: #fff; }
.tab.current { background: #e5efd7; width: 114px; padding: 0; margin-left: 2px; }
.collapse { display: flex; align-items: center; gap: 4px; margin-left: 22px; }
.pill { display: flex; align-items: center; justify-content: center; width: 15px; height: 9px; border: 1px solid #555; border-radius: 3px; background: #eee; }

.ribbon { display: flex; gap: 1px; height: 96px; flex: none; padding-top: 1px; background: #e5efd7; border-bottom: 1px solid #c8c8c8; }
.panel { display: flex; flex-direction: column; background: #efefef; }
.panel.green { background: none; margin-right: 1px; }
.panel:nth-child(9) { margin-left: 3px; }
.panel.green .panel-body { background: #efefef; }
.panel-body { display: flex; height: 75px; padding: 2px 0 1px; }
.panel-title { display: flex; align-items: center; justify-content: center; gap: 6px; height: 16px; line-height: 16px; color: #333; }
.col { display: flex; flex-direction: column; }
.cell { display: flex; flex: 1; align-items: center; justify-content: center; gap: 4px; min-height: 0; color: #a5a5a5; }
.cell.start { justify-content: flex-start; padding-left: 6px; }
.cell .caret { border-top-color: #777; }
.cell.active { flex: none; height: 34px; width: 38px; margin: 1px auto; background: #c4dcf2; border: 1px solid #4a8bcf; }
.big .cell, .select .cell { flex-direction: column; justify-content: flex-start; gap: 0; padding-top: 4px; white-space: pre-line; line-height: 15px; }
.cell-label { white-space: pre-line; }
.big .cell-label { padding-top: 5px; }
.col.select .cell.active { width: 44px; height: 72px; margin: 0 auto; }
.col.select .cell-label { padding-top: 5px; }

.options { height: 28px; flex: none; padding-left: 8px; line-height: 27px; background: #e5efd7; border-bottom: 2px solid #c8c8c8; }
.work { display: flex; flex: 1; min-height: 0; }

.side { display: flex; flex-direction: column; width: 346px; flex: none; background: #efefef; border-right: 2px solid #cbcbcb; }
.pane-title { height: 20px; flex: none; padding-left: 3px; line-height: 21px; color: #333; }
.pane-title.browser { border-top: 2px solid #cbcbcb; height: 22px; line-height: 20px; }
.type-card { display: flex; align-items: center; height: 72px; flex: none; margin: 0 2px 0 1px; padding: 2px 1px 2px 2px; border: 1px solid #cbcbcb; color: #444; line-height: 16px; }
.thumb { display: flex; align-items: center; justify-content: center; width: 66px; height: 66px; border: 1px solid #cbcbcb; background: #fff; overflow: hidden; }
.type-name { flex: 1; padding: 2px 0 0 4px; }
.type-card .caret.wide { border-width: 4px; border-top: 4px solid #333; border-bottom: 0; }
.filter-row { display: flex; align-items: center; height: 25px; flex: none; padding-left: 1px; }
.select { appearance: none; border: 1px solid #cfcfcf; border-bottom-color: #b5b5b5; border-radius: 2px; padding: 0 3px; color: #111; background: #fff url("data:image/svg+xml,%3Csvg xmlns='http://www.w3.org/2000/svg' width='10' height='6' fill='none' stroke='%23555'%3E%3Cpath d='M1 1l4 4 4-4'/%3E%3C/svg%3E") no-repeat right 3px center; }
.filter { width: 259px; height: 23px; }
.edit-type { display: flex; align-items: center; gap: 4px; height: 21px; margin: 0 0 3px 5px; }
.instance-area { flex: none; height: 272px; margin: 0 2px 0 1px; background: #fff; }
.grid { table-layout: fixed; border-collapse: separate; border-spacing: 0; width: 100%; background: #fff; }
.grid th, .grid td { padding: 0; height: 18px; line-height: 15px; vertical-align: top; overflow: hidden; white-space: nowrap; }
.grid td { border-bottom: 1px dotted #777; }
.grid td.value { border-left: 1px dotted #777; border-right: 1px dotted #777; padding-left: 2px; }
.grid td.eq { border-right: 1px dotted #777; padding: 1px 0 0 1px; }
.grid .group th { font-weight: 400; text-align: left; line-height: 17px; padding-left: 2px; background: #dadada; }
.grid .group th svg { margin-top: 4px; }
.instance .c-name { width: 165px; }
.instance .c-eq { width: 13px; }
.instance td.name { padding-left: 8px; }
.instance .group th:last-child { padding-left: 0; }
.instance td.boxed { border: 1px solid #000; line-height: 14px; }
.mini { display: block; width: 10px; height: 15px; background: #fff; border: 1px solid #c6c6c6; border-bottom-color: #a8a8a8; border-radius: 3px; }
.pane-foot { display: flex; justify-content: space-between; align-items: center; height: 28px; flex: none; padding: 0 5px 2px 3px; }
a { color: #0563c8; text-decoration: underline; }
.btn { height: 22px; border: 1px solid #d0d0d0; border-bottom-color: #b8b8b8; border-radius: 4px; background: #fdfdfd; text-align: center; line-height: 20px; }
.btn.disabled { background: #f6f6f6; border-color: #e8e8e8; color: #888; }
.btn.apply { width: 72px; height: 20px; line-height: 18px; }
.browser-area { display: flex; flex: 1; min-height: 0; margin: 0 2px 2px 1px; }
.tree { flex: 1; margin: 0; padding: 0; list-style: none; background: #fff; overflow: hidden; }
.tree li { display: flex; align-items: center; height: 18px; line-height: 17px; white-space: nowrap; }
.bold { font-weight: 700; }
.guide, .node { position: relative; width: 20px; height: 18px; flex: none; }
.guide::before { content: ""; position: absolute; left: 8px; top: 0; bottom: 0; border-left: 1px dotted #888; }
.guide.leaf::after { content: ""; position: absolute; left: 9px; top: 10px; width: 14px; border-top: 1px dotted #888; }
.guide.leaf.last::before { bottom: 8px; }
.node { display: flex; padding: 6px 0 0 4px; }
.node::after { content: ""; width: 10px; margin-top: 4px; border-top: 1px dotted #888; flex: none; }
.pm { display: block; flex: none; width: 9px; height: 9px; border: 1px solid #888; border-radius: 1px; line-height: 7px; font-size: 9px; text-align: center; color: #224a9c; font-weight: 700; background: #fff; }
.root-icon { margin-left: 1px; }
.tree-text { margin-left: 6px; }
.tree-text.root { margin-left: 3px; padding: 0 3px; line-height: 18px; background: #e2e2e2; }
.vscroll { width: 16px; flex: none; }
.vscroll i { display: block; width: 2px; height: 149px; margin: 17px 0 0 8px; background: #8a8a8a; }

.view { display: flex; flex: 1; flex-direction: column; min-width: 0; background: #fff; }
.doc-tabs { display: flex; justify-content: space-between; height: 20px; flex: none; background: #cbcbcb; }
.doc-tab { display: flex; align-items: center; width: 128px; padding: 0 5px 0 4px; background: #fff; color: #c8c8c8; font-weight: 700; }
.doc-tab span { flex: 1; padding-left: 6px; }
.customize.end { width: 16px; justify-content: center; }
.canvas-row { display: flex; flex: 1; min-height: 0; }
.canvas { position: relative; flex: 1; overflow: hidden; background: #fff; }
.plan { position: absolute; left: 0; top: 0; width: 100%; height: 100%; }
.note { position: absolute; margin: 0; font-family: "Liberation Sans", Arial, sans-serif; font-size: 29px; line-height: 33px; color: #000; white-space: nowrap; left: 1257px; }
.note.headline { left: 19px; top: 4px; font-size: 24px; line-height: 28px; }
.note.window { top: 117px; }
.note.column { top: 210px; }
.note.stairs { top: 359px; }
.note.table { top: 500px; }
.note.wall { top: 587px; }
.navbar { position: absolute; right: 1px; top: 2px; display: flex; flex-direction: column; align-items: center; width: 36px; height: 117px; border: 2px solid #bdbdbd; border-radius: 6px; background: #f4f4f4; }
.navbar .caret { border-top-color: #888; }
.navbar hr { width: 26px; margin: 4px 0 8px; border: 0; border-top: 1px solid #bbb; }
.navbar svg { margin-bottom: 4px; }
.dot { align-self: flex-end; width: 8px; height: 8px; margin: 2px 3px 8px; border-radius: 4px; background: #b5b5b5; color: #fff; font: bold 9px/7px "Liberation Sans", sans-serif; text-align: center; }
.dot.bottom { margin: 11px 3px 0; }
.two-d { align-self: flex-end; height: 8px; margin: -12px 2px 6px 0; font: bold 9px/8px "Liberation Sans", sans-serif; color: #6f9cc9; }
.canvas-scroll { width: 16px; flex: none; background: #efefef; }
.canvas-scroll i { display: block; width: 2px; height: 17px; margin: 391px 0 0 7px; background: #8a8a8a; }
.viewbar { display: flex; align-items: center; gap: 4px; height: 18px; flex: none; margin-left: 2px; padding: 0 0 1px 24px; background: #efefef; border-bottom: 2px solid #fff; }
.scale { width: 51px; }
.hthumb { width: 17px; height: 2px; margin-left: 613px; background: #777; }

.status { display: flex; align-items: center; height: 24px; flex: none; background: #cbcbcb; line-height: 22px; }
.ready { width: 895px; padding-left: 1px; }
.w-icon { margin-right: 8px; }
.select.flat { width: 204px; height: 18px; border-color: #ddd; border-radius: 0; color: #666; line-height: 16px; padding: 0 2px; }
.req { margin-left: 8px; }
.count { width: 36px; padding-left: 5px; }
.opt2 { margin: 0 8px 0 12px; }
.right-tools { display: flex; align-items: center; gap: 8px; margin-left: auto; padding-right: 72px; }
.right-tools span { margin-left: -7px; }

.dialog { position: absolute; left: 373px; top: 361px; width: 975px; height: 611px; border: 1px solid #a8a8a8; border-radius: 8px; background: #efefef; box-shadow: 0 14px 34px rgba(0, 0, 0, .42), 0 0 8px rgba(0, 0, 0, .12); font-family: Roboto, sans-serif; overflow: visible; }
.dlg-title { display: flex; justify-content: space-between; align-items: center; height: 30px; padding: 0 8px; background: #f3f3f3; border-radius: 8px 8px 0 0; }
.form { display: flex; gap: 13px; padding: 11px 12px 0 20px; }
.fields { display: flex; flex: 1; flex-direction: column; gap: 12px; }
.field { display: flex; align-items: center; height: 21px; }
.field label { width: 69px; }
.field .select { flex: 1; height: 21px; padding-top: 1px; }
.side-btns { display: flex; flex-direction: column; gap: 9px; padding-top: 2px; width: 106px; }
.params-label { margin: 6px 0 3px 20px; }
.params { display: flex; height: 377px; margin: 0 12px 0 20px; border: 2px solid #fff; border-top-color: #848484; border-left-color: #848484; font-family: "Noto Sans", sans-serif; }
.params-clip { width: 920px; height: 373px; overflow: hidden; padding-right: 1px; background: #fff; }
.types .c-name { width: 445px; }
.types .c-eq { width: 13px; }
.types thead th { height: 21px; line-height: 19px; font-weight: 400; background: #efefef; border-bottom: 1px solid #000; border-right: 1px solid #000; text-align: center; }
.types td.name { padding-left: 2px; }
.types td.value { border-left: 0; padding-left: 1px; }
.types td.name { border-right: 1px dotted #777; }
.types .group th { height: 22px; line-height: 18px; font-weight: 700; background: #99b3d1; border-top: 3px solid #fff; }
.types .group th:last-child { padding-left: 0; }
.types .dim td { color: #7b7b7b; }
.edit { display: flex; justify-content: space-between; height: 17px; }
.edit input { width: 118px; height: 16px; border: 0; background: #0078d7; color: #fff; outline: none; }
.drop { display: flex; align-items: center; justify-content: center; width: 15px; height: 16px; border: 1px solid #bbb; border-right-color: #666; border-bottom-color: #666; background: #fff; margin-right: 1px; }
.params-scroll { flex: 1; background: #efefef; }
.params-scroll i { display: block; width: 2px; height: 119px; margin: 220px 0 0 9px; background: #7a7a7a; }
.help-link { margin: 10px 0 0 20px; }
.dlg-foot { display: flex; gap: 8px; margin: 15px 12px 0 20px; }
.dlg-foot .btn { width: 88px; }
.dlg-foot .preview { margin-right: auto; }
.btn.ok { border-color: #0a6cc0; }
.grip { position: absolute; right: 1px; bottom: 1px; }

.tooltip { position: absolute; left: 327px; top: 669px; width: 235px; height: 113px; padding: 7px 7px 7px 8px; background: rgba(240, 240, 240, .45); border-radius: 4px; box-shadow: 0 2px 6px rgba(0, 0, 0, .22); color: #878787; }
.tooltip p { margin: 4px 0 7px; line-height: 15px; white-space: nowrap; }
.tooltip .f1 { display: block; border-top: 1px solid #c4c4c4; padding-top: 6px; }
.tooltip b { font-weight: 700; }
.markup { position: absolute; left: 0; top: 0; width: 100%; height: 100%; pointer-events: none; }
</style>
